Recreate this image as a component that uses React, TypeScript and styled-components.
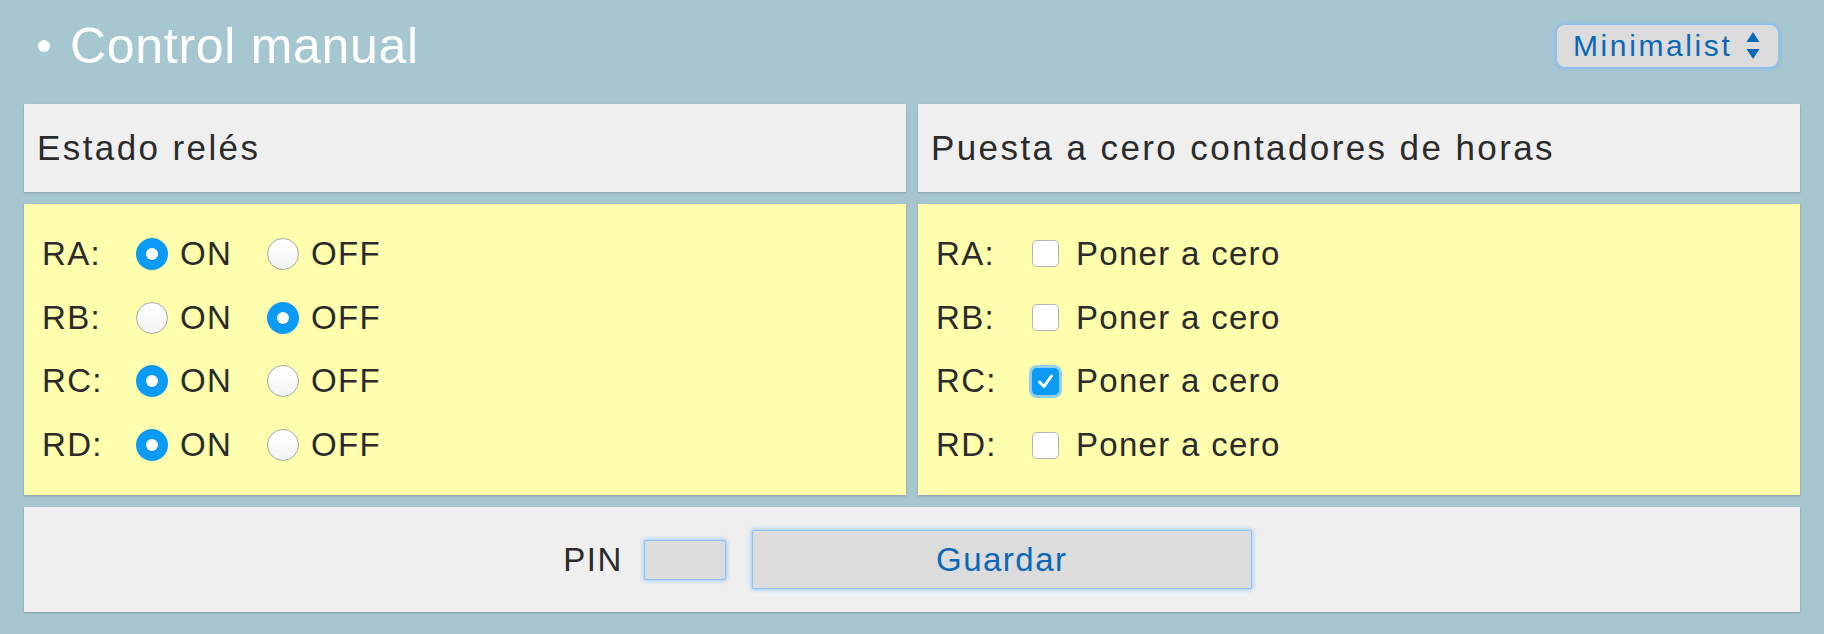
import styled, { createGlobalStyle } from "styled-components";

const GlobalStyle = createGlobalStyle`
  html, body {
    margin: 0;
    padding: 0;
    background: #a6c6d0;
  }
  body {
    font-family: "Liberation Sans", Arial, sans-serif;
    color: #2b2b2b;
  }
`;

const Page = styled.div`
  padding: 0 24px 22px 24px;
  display: flex;
  flex-direction: column;
  gap: 12px;
`;

const TopBar = styled.div`
  height: 92px;
  display: flex;
  align-items: center;
  justify-content: space-between;
`;

const Title = styled.h1`
  margin: 0;
  display: flex;
  align-items: center;
  font-size: 50px;
  line-height: 1;
  font-weight: normal;
  letter-spacing: 0.7px;
  color: #ffffff;
`;

const Bullet = styled.span`
  width: 12px;
  height: 12px;
  border-radius: 50%;
  background: #ffffff;
  margin: 0 20px 0 14px;
`;

const Select = styled.div`
  display: flex;
  align-items: center;
  gap: 14px;
  height: 42px;
  width: 221px;
  box-sizing: border-box;
  padding: 0 10px 0 16px;
  margin-right: 22px;
  border-radius: 8px;
  background: #dcdcdc;
  box-shadow: 0 0 0 1px #8ec0f2, 0 0 4px 1px #7db8f4;
  color: #0a68b5;
  font-size: 30px;
  letter-spacing: 2.6px;
`;

const Arrows = styled.svg`
  width: 14px;
  height: 30px;
  flex-shrink: 0;
`;

const Columns = styled.div`
  display: grid;
  grid-template-columns: 1fr 1fr;
  grid-template-rows: 88px 291px;
  gap: 12px;
`;

const Panel = styled.div<{ $tone: "grey" | "yellow" }>`
  background: ${({ $tone }) => ($tone === "yellow" ? "#ffffad" : "#efefef")};
  box-shadow: 0 1px 2px rgba(0, 0, 0, 0.22);
`;

const Heading = styled(Panel)`
  display: flex;
  align-items: center;
  padding: 0 13px;
  font-size: 35px;
  letter-spacing: 2.4px;
`;

const Body = styled(Panel)`
  padding: 18px 18px;
  display: flex;
  flex-direction: column;
`;

const Row = styled.div`
  height: 64px;
  display: flex;
  align-items: center;
  font-size: 33px;
  letter-spacing: 1.3px;
`;

const RowLabel = styled.span<{ $width: number }>`
  width: ${({ $width }) => $width}px;
  flex-shrink: 0;
`;

const Option = styled.label`
  display: flex;
  align-items: center;
  gap: 12px;
  margin-right: 35px;
`;

const Radio = styled.span<{ $on: boolean }>`
  width: 32px;
  height: 32px;
  box-sizing: border-box;
  border-radius: 50%;
  display: flex;
  align-items: center;
  justify-content: center;
  background: ${({ $on }) => ($on ? "#0b9bf7" : "linear-gradient(#ffffff, #f4f4f4)")};
  border: ${({ $on }) => ($on ? "none" : "1px solid #a9a9a9")};

  &::after {
    content: "";
    display: ${({ $on }) => ($on ? "block" : "none")};
    width: 12px;
    height: 12px;
    border-radius: 50%;
    background: #ffffff;
    box-shadow: 0 1px 1px rgba(0, 0, 0, 0.15);
  }
`;

const Check = styled.span<{ $on: boolean }>`
  width: 27px;
  height: 27px;
  box-sizing: border-box;
  border-radius: 5px;
  margin-right: 17px;
  display: flex;
  align-items: center;
  justify-content: center;
  background: ${({ $on }) => ($on ? "#0b9bf7" : "#ffffff")};
  border: ${({ $on }) => ($on ? "none" : "1px solid #b4b4b4")};
  box-shadow: ${({ $on }) => ($on ? "0 0 0 3px #8fd0f0" : "none")};
`;

const Footer = styled(Panel)`
  height: 105px;
  display: flex;
  align-items: center;
  justify-content: center;
  font-size: 33px;
  letter-spacing: 1.5px;
`;

const PinLabel = styled.span`
  margin-right: 21px;
  margin-left: -9px;
`;

const PinInput = styled.div`
  width: 82px;
  height: 40px;
  box-sizing: border-box;
  border-radius: 2px;
  background: #dcdcdc;
  border: 1px solid #8fc2f7;
  box-shadow: 0 0 4px 1px #9ccaf7;
  margin-right: 26px;
`;

const SaveButton = styled.button`
  width: 500px;
  height: 59px;
  border-radius: 2px;
  background: #dcdcdc;
  border: 1px solid #8fc2f7;
  box-shadow: 0 0 4px 1px #9ccaf7;
  color: #0a68b5;
  font-family: "Liberation Sans", Arial, sans-serif;
  font-size: 33px;
  letter-spacing: 1.5px;
  padding: 0;
`;

const relays: { name: string; on: boolean }[] = [
  { name: "RA", on: true },
  { name: "RB", on: false },
  { name: "RC", on: true },
  { name: "RD", on: true },
];

const resets: { name: string; checked: boolean }[] = [
  { name: "RA", checked: false },
  { name: "RB", checked: false },
  { name: "RC", checked: true },
  { name: "RD", checked: false },
];

function TickIcon() {
  return (
    <svg width="19" height="19" viewBox="0 0 19 19">
      <path d="M3.5 10 L8 14.5 L15.5 4" fill="none" stroke="#ffffff" strokeWidth="3" strokeLinecap="round" strokeLinejoin="round" />
    </svg>
  );
}

export default function App() {
  return (
    <>
      <GlobalStyle />
      <Page>
        <TopBar>
          <Title>
            <Bullet />
            Control manual
          </Title>
          <Select>
            Minimalist
            <Arrows viewBox="0 0 14 30">
              <path d="M7 1 L13.5 11 L0.5 11 Z" fill="#0a68b5" />
              <path d="M0.5 18 L13.5 18 L7 28 Z" fill="#0a68b5" />
            </Arrows>
          </Select>
        </TopBar>

        <Columns>
          <Heading $tone="grey">Estado relés</Heading>
          <Heading $tone="grey">Puesta a cero contadores de horas</Heading>

          <Body $tone="yellow">
            {relays.map((r) => (
              <Row key={r.name}>
                <RowLabel $width={94}>{r.name}:</RowLabel>
                <Option>
                  <Radio $on={r.on} />
                  ON
                </Option>
                <Option>
                  <Radio $on={!r.on} />
                  OFF
                </Option>
              </Row>
            ))}
          </Body>

          <Body $tone="yellow">
            {resets.map((r) => (
              <Row key={r.name}>
                <RowLabel $width={96}>{r.name}:</RowLabel>
                <Check $on={r.checked}>{r.checked && <TickIcon />}</Check>
                Poner a cero
              </Row>
            ))}
          </Body>
        </Columns>

        <Footer $tone="grey">
          <PinLabel>PIN</PinLabel>
          <PinInput />
          <SaveButton>Guardar</SaveButton>
        </Footer>
      </Page>
    </>
  );
}
